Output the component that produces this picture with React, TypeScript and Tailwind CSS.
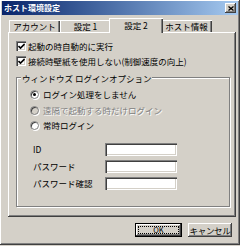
const raised =
  "shadow-[inset_-1px_-1px_0_#404040,inset_1px_1px_0_#ffffff,inset_-2px_-2px_0_#808080]";
const sunken =
  "shadow-[inset_1px_1px_0_#808080,inset_2px_2px_0_#404040,inset_-1px_-1px_0_#ffffff,inset_-2px_-2px_0_#d4d0c8]";

function CheckBox({ label }: { label: string }) {
  return (
    <div className="flex h-[12px] items-center gap-[2px] whitespace-nowrap">
      <span className={`flex h-[10px] w-[10px] shrink-0 items-center justify-center bg-white ${sunken}`}>
        <svg width="7" height="7" viewBox="0 0 7 7">
          <path d="M0.5 3 L2.5 5 L6.5 1" stroke="#000" strokeWidth="1.6" fill="none" />
        </svg>
      </span>
      <span>{label}</span>
    </div>
  );
}

function Radio({ label, checked, disabled }: { label: string; checked?: boolean; disabled?: boolean }) {
  return (
    <div className="flex h-[12px] items-center gap-[4px] whitespace-nowrap pl-[13px]">
      <span
        className={`flex h-[9px] w-[9px] shrink-0 items-center justify-center rounded-full border border-[#808080] ${
          disabled ? "bg-[#d4d0c8]" : "bg-white"
        } shadow-[inset_1px_1px_0_#404040,1px_1px_0_#ffffff]`}
      >
        {checked && <span className="h-[3px] w-[3px] rounded-full bg-black" />}
      </span>
      <span className={disabled ? "text-[#808080] [text-shadow:1px_1px_0_#ffffff]" : ""}>{label}</span>
    </div>
  );
}

function Field({ label }: { label: string }) {
  return (
    <div className="flex h-[13px] items-center whitespace-nowrap">
      <span className="w-[88px] shrink-0 pl-[16px]">{label}</span>
      <span className={`h-[13px] w-[72px] bg-white ${sunken}`} />
    </div>
  );
}

function Tab({ label, active }: { label: string; active?: boolean }) {
  return active ? (
    <div className="relative z-10 -mx-[2px] -mb-px flex h-[15px] w-[54px] items-center justify-center whitespace-nowrap bg-[#d4d0c8] pb-[1px] shadow-[inset_1px_1px_0_#ffffff,inset_-1px_0_0_#404040,inset_-2px_0_0_#808080]">
      {label}
    </div>
  ) : (
    <div className="flex h-[12px] w-[51px] items-center justify-center whitespace-nowrap shadow-[inset_1px_1px_0_#ffffff,inset_-1px_0_0_#404040,inset_-2px_0_0_#808080]">
      {label}
    </div>
  );
}

export default function App() {
  return (
    <div className="h-[246px] w-[240px] bg-[#d4d0c8]">
      <div
        className={`flex h-[245px] w-[240px] flex-col px-[2px] pt-[1px] font-['Noto_Sans_CJK_JP','Noto_Sans',sans-serif] text-[8.5px] leading-none text-black ${raised}`}
      >
        <div className="flex h-[14px] items-center justify-between bg-gradient-to-r from-[#0a246a] to-[#a6caf0] pl-[2px] pr-[2px]">
          <span className="text-[8px] font-bold text-white">ホスト環境設定</span>
          <span className={`flex h-[10px] w-[11px] items-center justify-center bg-[#d4d0c8] ${raised}`}>
            <svg width="6" height="5" viewBox="0 0 6 5">
              <path d="M0.5 0.5 L5.5 4.5 M5.5 0.5 L0.5 4.5" stroke="#000" strokeWidth="1.3" />
            </svg>
          </span>
        </div>

        <div className="mt-[3px] flex h-[14px] items-end pl-[7px]">
          <Tab label="アカウント" />
          <Tab label="設定 1" />
          <Tab label="設定 2" active />
          <Tab label="ホスト情報" />
        </div>

        <div className={`ml-[6px] flex h-[185px] w-[228px] flex-col pl-[8px] pr-[6px] pt-[8px] ${raised}`}>
          <CheckBox label="起動の時自動的に実行" />
          <div className="mt-[3px]">
            <CheckBox label="接続時壁紙を使用しない(制御速度の向上)" />
          </div>

          <div className="relative mt-[10px] h-[130px] border border-[#808080] shadow-[inset_1px_1px_0_#ffffff,1px_1px_0_#ffffff]">
            <span className="absolute -top-[6px] left-[4px] whitespace-nowrap bg-[#d4d0c8] px-[1px] leading-[12px]">
              ウィンドウズ ログインオプション
            </span>
            <div className="flex flex-col pt-[10px]">
              <Radio label="ログイン処理をしません" checked />
              <div className="mt-[4px]">
                <Radio label="遠隔で起動する時だけログイン" disabled />
              </div>
              <div className="mt-[3px]">
                <Radio label="常時ログイン" />
              </div>
              <div className="mt-[12px] flex flex-col gap-[4px]">
                <Field label="ID" />
                <Field label="パスワード" />
                <Field label="パスワード確認" />
              </div>
            </div>
          </div>
        </div>

        <div className="mt-[6px] flex justify-end gap-[6px] pr-[6px]">
          <button className="h-[14px] w-[47px] border border-black bg-[#d4d0c8] p-0">
            <span className={`flex h-full w-full p-[2px] ${raised}`}>
              <span className="flex h-full w-full items-center justify-center border border-dotted border-black text-[7.5px]">
                OK
              </span>
            </span>
          </button>
          <button
            className={`flex h-[14px] w-[44px] items-center justify-center whitespace-nowrap bg-[#d4d0c8] p-0 tracking-[-0.3px] ${raised}`}
          >
            キャンセル
          </button>
        </div>
      </div>
    </div>
  );
}
